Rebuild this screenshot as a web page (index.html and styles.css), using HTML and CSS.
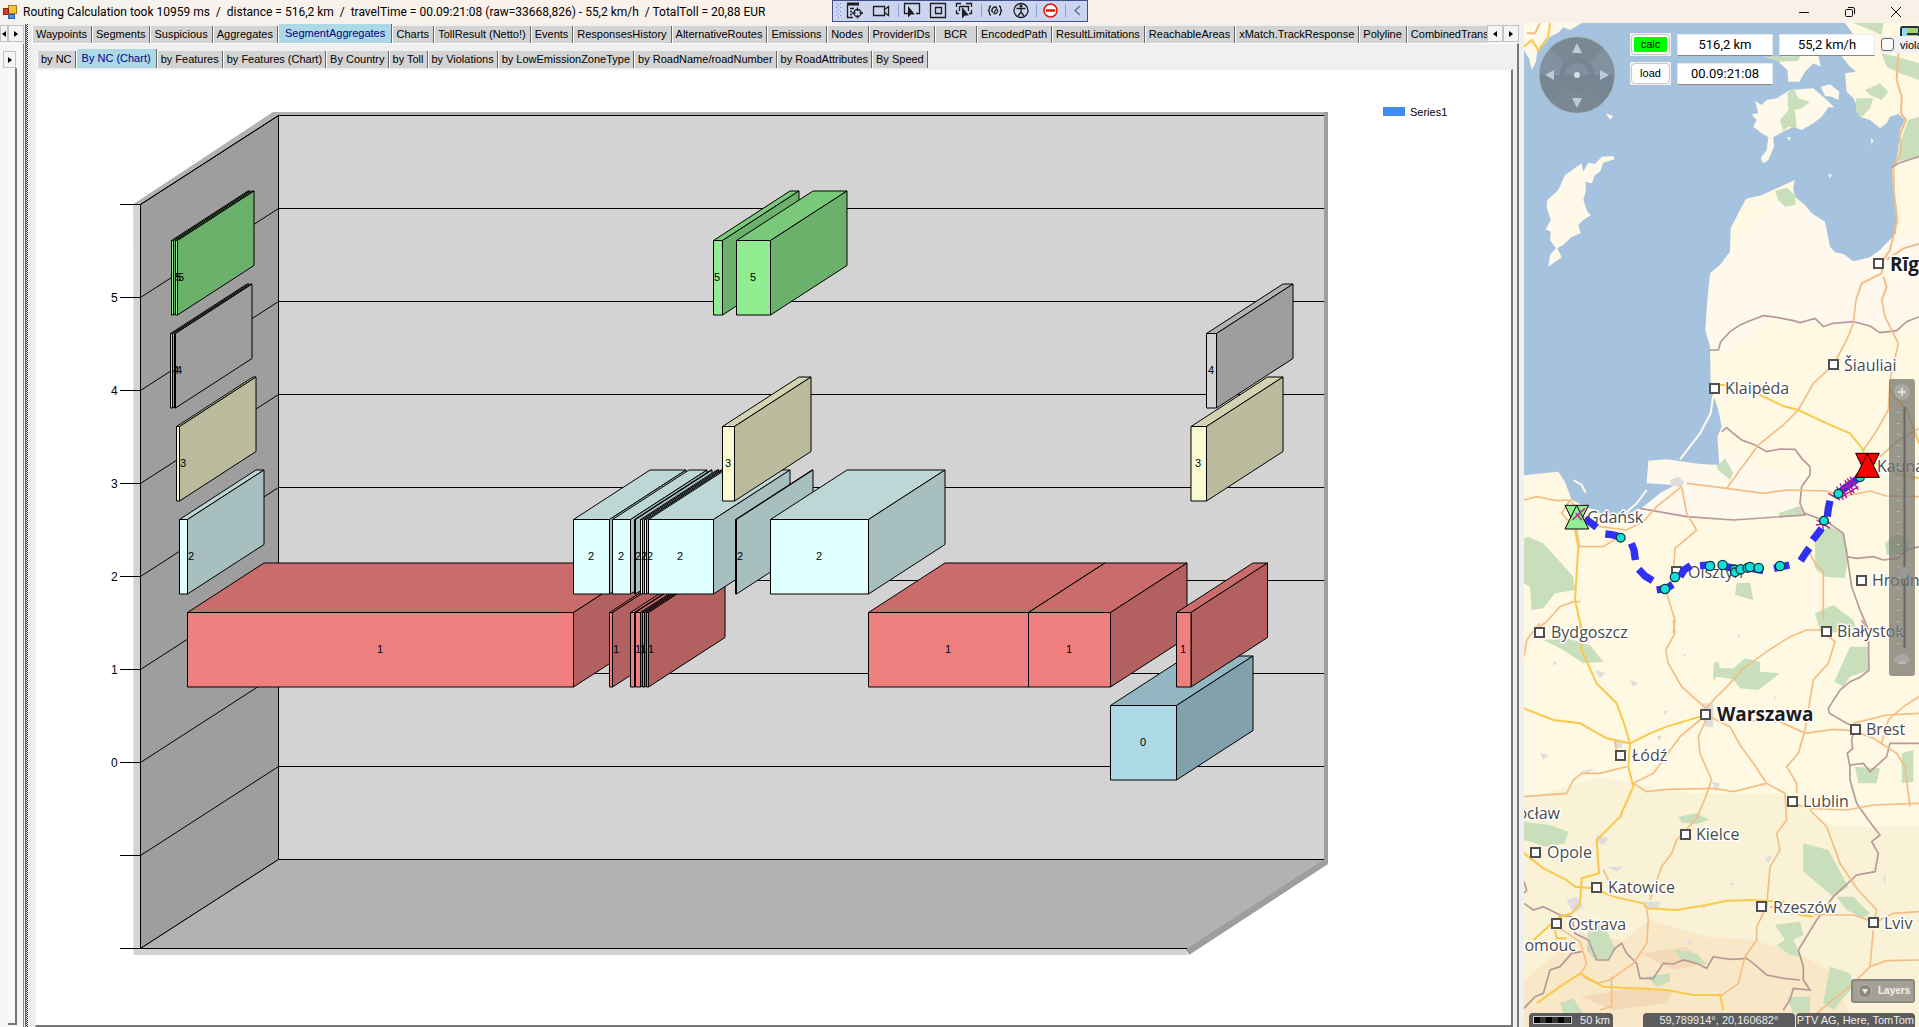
FILE: index.html
```html
<!DOCTYPE html>
<html lang="en">
<head>
<meta charset="utf-8">
<title>Routing Calculation</title>
<link rel="stylesheet" href="styles.css">
</head>
<body>
<header class="titlebar">
  <svg class="app-icon" viewBox="0 0 14 14"><rect x="5.500" y="0.500" width="8" height="8" fill="#f5c42c" stroke="#a67a1a"/><rect x="0.500" y="3.500" width="5" height="6" fill="#d63a2b" stroke="#8d2018"/><rect x="5.500" y="9.500" width="6" height="4" fill="#4a8df0" stroke="#2b5db0"/></svg>
  <h1 class="title">Routing Calculation took 10959 ms  /  distance = 516,2 km  /  travelTime = 00.09:21:08 (raw=33668,826) - 55,2 km/h  / TotalToll = 20,88 EUR</h1>
  <div class="debugbar">
    <svg viewBox="0 0 256 22" aria-hidden="true">
      <g fill="#7f8bb5"><path d="M4 3h1v1h-1zM8 3h1v1h-1zM4 7h1v1h-1zM8 7h1v1h-1zM4 11h1v1h-1zM8 11h1v1h-1zM4 15h1v1h-1zM8 15h1v1h-1zM6 5h1v1h-1zM6 9h1v1h-1zM6 13h1v1h-1zM6 17h1v1h-1z"/></g>
      <g fill="none" stroke="#1e1e1e" stroke-width="1.300">
        <path d="M15.500 5V17.500H21M18 8.500H22M18 11.500H20M18 14.500H20"/><path d="M15 4H27" stroke-width="3"/><circle cx="25.500" cy="13" r="3.500"/><path d="M25.500 7.500V11M25.500 15V18.500M20 13H23.500M27.500 13H31"/>
        <path d="M41.500 6.500H52.500V15.500H41.500zM52.500 9.500L56.500 6.500V15.500L52.500 12.500"/>
        <path d="M76 13.500H72.500V3.500H87.500V13.500H84"/>
        <path d="M98.500 3.500H113.500V17.500H98.500zM103.500 7.500H109.500V13.500H103.500z"/>
        <path d="M124.500 7V3.500H129M134 3.500H139.500V7M139.500 10V13.500H137M127 13.500H124.500V10M127.500 6.500H136.500V11M127.500 6.500V11"/>
        <path d="M159 6C156 6 159 10 156 10.500C159 11 156 15 159 15M167 6C170 6 167 10 170 10.500C167 11 170 15 167 15M161 12.500A3 3 0 0 1 165 8M165.500 9.500A3 3 0 0 1 161.500 13.500M162 13L165 8"/>
        <circle cx="189" cy="10.500" r="7"/><path d="M184.500 8.500H193.500M189 8V12L186 16M189 12L192 16"/>
      </g>
      <path d="M76 6V17.500L79 14.500H83zM130 7V18.500L133 15.500H137z" fill="#1e1e1e"/><circle cx="189" cy="6" r="1.500" fill="#1e1e1e"/>
      <path d="M66.500 4V17M149.500 4V17M204.500 4V17M233.500 4V17" stroke="#8ea0d6"/>
      <circle cx="218.500" cy="10.500" r="6.500" fill="#fff" stroke="#e51400" stroke-width="1.500"/><path d="M214 10.500H223" stroke="#e51400" stroke-width="2.500"/>
      <path d="M248 6L243 10.500L248 15" fill="none" stroke="#5b6694" stroke-width="1.300"/>
    </svg>
  </div>
  <div class="window-buttons">
    <button class="win" aria-label="Minimize"><svg viewBox="0 0 12 12"><path d="M1 6.500H11"/></svg></button>
    <button class="win" aria-label="Restore"><svg viewBox="0 0 12 12"><rect x="1.500" y="3.500" width="7" height="7" rx="1"/><path d="M4 1.500H9Q10.500 1.500 10.500 3V8"/></svg></button>
    <button class="win" aria-label="Close"><svg viewBox="0 0 12 12"><path d="M1 1L11 11M11 1L1 11"/></svg></button>
  </div>
</header>
<main class="workspace">
  <aside class="side">
    <div class="side-scroll"><button class="arrow left" aria-label="Scroll left"></button><button class="arrow right" aria-label="Scroll right"></button></div>
    <div class="side-page"><button class="arrow right" aria-label="Next tab"></button><div class="side-pane"></div></div>
  </aside>
  <div class="splitter"></div>
  <section class="results">
    <div class="tabrow">
      <nav class="tabs">
        <button class="tab">Waypoints</button><button class="tab">Segments</button><button class="tab">Suspicious</button><button class="tab">Aggregates</button><button class="tab active">SegmentAggregates</button><button class="tab">Charts</button><button class="tab">TollResult (Netto!)</button><button class="tab">Events</button><button class="tab">ResponsesHistory</button><button class="tab">AlternativeRoutes</button><button class="tab">Emissions</button><button class="tab">Nodes</button><button class="tab">ProviderIDs</button><button class="tab">BCR</button><button class="tab">EncodedPath</button><button class="tab">ResultLimitations</button><button class="tab">ReachableAreas</button><button class="tab">xMatch.TrackResponse</button><button class="tab">Polyline</button><button class="tab">CombinedTransport</button>
      </nav>
      <div class="tab-scroll"><button class="arrow left" aria-label="Scroll tabs left"></button><button class="arrow right" aria-label="Scroll tabs right"></button></div>
    </div>
    <div class="page">
      <nav class="tabs inner">
        <button class="tab">by NC</button><button class="tab active">By NC (Chart)</button><button class="tab">by Features</button><button class="tab">by Features (Chart)</button><button class="tab">By Country</button><button class="tab">by Toll</button><button class="tab">by Violations</button><button class="tab">by LowEmissionZoneType</button><button class="tab">by RoadName/roadNumber</button><button class="tab">by RoadAttributes</button><button class="tab">By Speed</button>
      </nav>
      <div class="pane"><svg id="chart" class="chart" viewBox="36 70 1475 955" role="img" aria-label="Segments by network class"></svg></div>
    </div>
  </section>
  <section class="map">
    <svg class="map-canvas" viewBox="1524 23 395 1004" preserveAspectRatio="xMinYMin slice">
      <rect x="1524" y="23" width="395" height="1004" fill="#fff8e2"/>
      <g transform="translate(1500 620) scale(.33333)">
        <path d="M72 540L300 470 560 520 840 520 1000 620 1257 620V1221H72Z" fill="#f9f2d6"/>
        <path d="M72 1080L240 940 370 960 450 900 620 950 760 960 900 1000 1000 1060 1060 1221H72Z" fill="#f9e8c8"/>
        <path d="M240 1130L420 1100 520 1110 500 1150 340 1170ZM420 1000L560 980 620 1030 520 1050Z" fill="#f3d9b5"/>
      </g>
      <g fill="#fff8ec"><path d="M1700 280L1780 200 1880 240 1919 230V330L1850 325 1770 320 1730 350 1705 350Z"/><path d="M1590 480L1720 450 1800 480 1790 520 1640 515Z"/></g>
      <g transform="translate(1500 20) scale(.33333)" fill="#a5c3df">
        <path d="M72 9H1035L1058 40 1030 75 1026 110 1050 140 1068 155 1035 160 1040 215 1060 235 1072 260 1080 290 1110 300 1140 325 1160 310 1170 290 1195 282 1215 300 1200 330 1195 390 1185 440 1176 450 1180 520 1190 560 1188 640 1140 690 1110 712 1060 724 1030 702 1005 697 990 680 975 605 935 580 915 555 885 530 880 505 884 480 784 526 738 536 720 570 692 625 690 695 660 735 630 760 622 842H72Z"/>
        <g fill="#fff9ea">
          <path d="M72 9H245L210 30 190 22 175 38 150 50 130 75 112 90 108 125 95 150 88 118 72 90Z"/>
          <path d="M145 740L150 705 168 685 150 660 152 635 137 628 152 600 140 560 142 540 175 510 195 465 245 430 250 455 265 428 285 432 305 410 340 408 343 418 310 428 300 455 285 465 275 490 256 485 258 510 250 540 262 575 273 585 250 600 235 615 242 640 215 650 190 675 172 685 185 712Z"/>
          <path d="M765 243L785 255 800 240 830 235 870 210 940 205 975 235 1003 262 985 262 965 290 940 310 905 330 880 320 840 340 820 352 822 380 805 420 790 430 782 415 800 390 805 352 785 340 760 320 770 300 755 283 775 280Z"/>
          <path d="M962 200L990 193 1018 215 1015 240 995 230 975 228Z"/>
          <path d="M858 105H955L962 140 940 130 915 155 898 185H865L862 150 840 130 830 115Z"/>
          <path d="M318 280L340 288 330 299ZM1113 355L1120 360 1115 375ZM985 462L997 465 990 474ZM862 350L872 352 867 364Z"/>
        </g>
        <g fill="#c9dfbb">
          <path d="M862 220L880 205 895 235 930 245 905 265 885 270 890 325 865 320 850 335 840 300 865 270ZM1068 235L1120 235 1110 265 1085 292 1068 275ZM1095 210L1140 190 1165 215 1145 240 1110 225ZM1060 9H1150L1145 45 1100 25ZM1145 100L1190 110 1257 130V180L1200 160 1160 140ZM1225 300L1257 290V410L1190 425 1200 370ZM825 512L860 503 886 525 886 555 855 560 835 540ZM790 110L900 108 895 122 840 125Z"/>
        </g>
        <g fill="none" stroke="#f4bd85" stroke-width="6"><path d="M1198 60L1190 180 1205 230 1203 280 1218 300 1200 345 1203 400 1180 440 1182 520 1192 600 1170 690 1150 720L1145 760 1085 790 1068 840M1150 770L1160 800 1145 840M1160 720L1210 685 1257 672M120 9L105 40 80 40"/></g>
        <path d="M150 9L145 50 115 90 95 60 72 80" fill="none" stroke="#fac94b" stroke-width="6"/>
        <path d="M1175 443L1195 430 1225 420 1257 410" fill="none" stroke="#b89898" stroke-width="5"/>
      </g>
      <g transform="translate(1500 300) scale(.33333)">
        <path d="M72 -3H622L616 90 630 140 632 250 642 290 655 330 665 380 652 410 655 455 658 495 600 492 500 478 445 482 440 550 525 555 480 580 430 620 380 645 320 648 215 600 195 545 175 515 72 526Z" fill="#a5c3df"/>
        <path d="M640 285L632 340 600 400 540 478M440 570L410 610 370 645M220 540L245 555 257 578" fill="none" stroke="#fff9ea" stroke-width="6"/>
        <path d="M84 710L130 730 220 830 225 870 165 880 130 925 95 930 90 860 72 850V715ZM650 500L675 475 700 520 690 540 655 510ZM835 640L900 618 915 645 840 652ZM945 700L990 680 1030 700 1045 760 1035 835 975 830 945 805ZM710 850L750 848 760 900 705 885ZM945 940L1000 915 1060 960 1070 990H960ZM1155 730L1190 700 1225 720 1225 760 1160 765Z" fill="#c9dfbb"/>
        <path d="M510 540L535 530 552 545 545 560 512 558Z" fill="#e0dcd8"/>
        <g fill="none" stroke="#b89898" stroke-width="5"><path d="M628 150L655 150 662 125 690 95 720 75 750 62 790 47 830 52 880 62 900 68 945 55 970 80 1000 70 1060 65 1110 78 1140 98 1190 92 1220 65 1257 50M665 395L680 383 700 400 725 420 765 435 800 455 840 447 885 448 905 475 930 500 930 525 905 560 900 610 915 645 700 660 560 650 420 625M915 640L980 665 1030 700 1040 760 1055 860 1080 930 1110 1000M1040 770L1070 775 1120 770 1150 780 1190 775 1220 750 1257 740"/></g>
        <g fill="none" stroke="#f4bd85" stroke-width="5"><path d="M1068 0L1060 70 1040 120 1000 195 940 250 895 330 850 375 775 435 720 510 680 565 560 550M1145 0L1155 50 1195 130 1170 240 1165 330 1125 400 1090 450M680 565L790 580 860 570 980 573 1030 590 1110 573 1160 588 1257 590M545 560L470 620 430 665 380 690 300 680 250 650 210 600 170 602 110 590 72 600M545 560L560 640 590 690 525 745 520 830 500 880 525 960 520 1000M210 600L185 640 230 690 238 740 310 740 350 715M930 760L945 790 970 815 970 960M105 990L140 965 180 920 220 905 240 905M1140 470L1190 425 1257 385"/></g>
        <g fill="none" stroke="#fac94b" stroke-width="6"><path d="M660 255H720L790 290 850 318 895 330 980 370 1050 400 1090 450V470L1180 520 1257 535M225 690L235 740 225 900 245 990M1170 270L1220 330 1257 430"/></g>
      </g>
      <g transform="translate(1500 620) scale(.33333)">
        <path d="M130 60L200 55 270 75 310 125 250 130 190 90ZM640 130L655 125 660 145 700 145 735 115 780 125 780 155 840 160 775 210 720 205 700 178 650 170 640 185ZM1050 80L1105 80 1105 150 1050 170 1030 200 1003 185ZM955 0L1040 0 1060 30 980 40ZM72 605L150 615 205 635 195 670 140 680 72 660ZM535 590L590 580 628 600 590 612 545 608ZM910 670L985 690 1045 800 1000 830 910 755ZM1065 440L1140 445 1130 490 1075 490ZM1205 400L1240 390 1240 485 1205 490ZM265 930L310 910 345 985 320 1020 285 1020 260 990ZM525 990L590 1000 620 1035 540 1015ZM825 915L900 905 910 945 880 960 905 1010 870 1005 830 975 855 960ZM440 1070L510 1060 510 1085 470 1100ZM860 1130L930 1130 930 1180H880ZM990 1040L1050 1060 1060 1100 1000 1170 970 1150ZM1010 830L1060 830 1110 880 1090 895 1040 870ZM180 1150L220 1135 250 1180H190Z" fill="#c9dfbb"/>
        <path d="M605 250H640V320H615ZM340 360L370 365 365 385H345ZM390 180L415 190 400 200ZM285 150L315 160 300 175ZM240 455L285 445 260 460ZM290 645L325 655 310 675 290 665ZM200 840L230 830 250 860 220 880ZM430 845L480 845 475 870 435 865ZM320 740L370 740 350 755ZM550 100L560 105 552 110ZM780 490L800 488 790 500ZM635 485L660 490 650 515ZM120 400L145 405 130 420ZM470 350L485 345 480 362ZM710 45L722 42 716 55ZM160 125L172 128 162 138ZM490 275L502 270 496 285ZM795 715L818 705 805 730ZM600 860L622 855 612 868ZM690 790L705 788 697 800ZM560 960L575 960 570 980ZM1150 770L1158 768 1153 800ZM820 230L830 230 826 238ZM360 585L370 585 362 600Z" fill="#dedcdf"/>
        <g fill="none" stroke="#b89898" stroke-width="5"><path d="M1085 0L1105 35 1107 150 1080 172 1050 185 1020 210 985 265 988 280 1040 310 1065 320 1055 360 1058 385 1042 400 1050 440 1050 480 1070 550 1105 600 1140 645 1115 665 1135 700 1125 755 1070 765 1000 830 950 900 895 990 910 1040 910 1080 930 1110 880 1105 870 1140 850 1170M1050 435L1090 430 1110 455 1160 410 1170 370H1257M72 850L100 870 130 860 180 885 215 890 225 940 265 960 290 1020 325 1020 345 985 365 970 380 1000 410 1030 420 1075 460 1075 490 1030 520 1032 550 1020 590 1030 620 1045 640 1010 670 1015 700 1018 740 1015 760 1030 800 1065 850 1075 900 1080M245 995L215 1000 180 1040 150 1050 130 1120 105 1130 72 1165M72 785L80 810 72 820"/></g>
        <g fill="none" stroke="#f4bd85" stroke-width="5"><path d="M520 0L525 40 497 90 505 130 545 200 618 265 650 230 690 190 730 145 800 95 870 50 920 30 960 30 1005 65 985 130 940 180 930 240 915 330 895 400 860 440 890 490 890 520M618 285L540 350 500 405 460 460 400 490 440 515 500 508 640 505 700 515 800 490 855 520 860 600 830 640 840 690 810 740 800 860 770 920 770 960 735 1010 715 1090 660 1130M618 300L595 350 600 400 635 480 615 535 590 595 530 660 515 700 485 740 450 840M618 285L690 320 720 375 760 430 800 490M720 300L840 305 915 340 1000 328 1060 332 1120 355 1190 400 1215 440 1230 560M1060 310L1160 285 1257 280M1145 370L1165 300 1210 260 1257 230M870 548L930 565 1040 570 1120 555 1257 550M930 570L980 620 1020 730 1070 805 1130 870 1120 910 1180 880 1257 875M1120 930L1110 1040 1060 1090 1010 1130 950 1180M1110 1040L1160 1022 1257 1020M72 530L200 520 220 480 245 460 300 460 380 440M345 360L350 400M810 860L870 880 1010 885 1060 885 1120 905M440 870L445 900 440 970 400 1030 330 1080 290 1090 250 1070M310 750L330 790M72 110L80 60 120 10M180 925L240 965 260 1030 240 1065M335 1070V1160L300 1170"/></g>
        <g fill="none" stroke="#fac94b" stroke-width="6"><path d="M240 0L245 90 290 190 350 250 372 310 390 370 385 440 400 500 360 590 290 660 297 760 245 775 240 850 215 880 180 890 140 925 100 960M72 265L160 300 240 310 320 355 390 370 450 340 500 320 600 290M72 700L130 745 200 780 225 800 280 805 340 830 430 850 440 865 530 870 620 855 680 842 750 840 850 845 900 885 940 890M165 930L170 955 200 955M110 1150L180 1100 240 1060 310 1100 400 1105 500 1110 580 1125 660 1125 670 1170"/></g>
      </g>
      <g class="city-box" fill="#fff" stroke="#505050" stroke-width="2"><rect x="1874" y="259" width="9" height="9"/><rect x="1829" y="360" width="9" height="9"/><rect x="1710" y="384" width="9" height="9"/><rect x="1672" y="567" width="9" height="9"/><rect x="1857" y="576" width="9" height="9"/><rect x="1822" y="627" width="9" height="9"/><rect x="1535" y="628" width="9" height="9"/><rect x="1701" y="710" width="9" height="9"/><rect x="1616" y="751" width="9" height="9"/><rect x="1851" y="725" width="9" height="9"/><rect x="1788" y="797" width="9" height="9"/><rect x="1681" y="830" width="9" height="9"/><rect x="1531" y="848" width="9" height="9"/><rect x="1592" y="883" width="9" height="9"/><rect x="1552" y="919" width="9" height="9"/><rect x="1757" y="902" width="9" height="9"/><rect x="1869" y="918" width="9" height="9"/></g>
      <g class="city">
        <text class="capital" x="1890" y="271">Rīga</text><text x="1844" y="371">Šiauliai</text><text x="1725" y="394">Klaipėda</text><text x="1877" y="472">Kaunas</text><text x="1587" y="523">Gdańsk</text><text x="1688" y="578">Olsztyn</text><text x="1872" y="586">Hrodna</text><text x="1837" y="637">Białystok</text><text x="1551" y="638">Bydgoszcz</text><text class="capital" x="1717" y="721">Warszawa</text><text x="1632" y="761">Łódź</text><text x="1866" y="735">Brest</text><text x="1803" y="807">Lublin</text><text x="1696" y="840">Kielce</text><text x="1560" y="819" text-anchor="end">ocław</text><text x="1547" y="858">Opole</text><text x="1608" y="893">Katowice</text><text x="1568" y="930">Ostrava</text><text x="1773" y="913">Rzeszów</text><text x="1884" y="929">Lviv</text><text x="1576" y="951" text-anchor="end">lomouc</text>
      </g>
      <g transform="translate(1500 300) scale(.33333)">
        <g fill="none" stroke="#3030f5" stroke-width="22" stroke-linejoin="round"><path d="M255 655L290 682M316 702L335 704 358 710M394 730L402 750 406 780M416 808L435 828 458 842M470 870L500 865 518 853M540 830L552 810 572 797M600 797L640 795M660 795L700 805M740 802L790 812M822 805L868 795M902 782L915 762 928 744M938 720L950 705 965 685M982 650L985 625 990 602M1010 585L1040 560 1075 535"/></g>
        <g stroke="#b5169b" stroke-width="4"><path d="M215 660L255 625M225 635L250 665M240 620L235 670M950 660L990 685M948 675L992 668M965 650L970 690M1000 590L1065 530M1020 550L1040 595M1035 540L1055 585M1050 530L1075 570M1010 560L1030 600M1015 575L1070 545M1025 590L1075 560M1042 535L1062 580M985 580L1020 600"/></g>
        <g fill="#12dede" stroke="#083838" stroke-width="4"><circle cx="362" cy="713" r="13"/><circle cx="495" cy="867" r="14"/><circle cx="525" cy="831" r="14"/><circle cx="630" cy="798" r="14"/><circle cx="668" cy="795" r="14"/><circle cx="703" cy="808" r="13"/><circle cx="705" cy="817" r="13"/><circle cx="722" cy="808" r="14"/><circle cx="742" cy="804" r="13"/><circle cx="750" cy="801" r="14"/><circle cx="776" cy="804" r="14"/><circle cx="840" cy="798" r="14"/><circle cx="972" cy="662" r="13"/><circle cx="1015" cy="581" r="13"/><circle cx="1080" cy="532" r="13"/></g>
        <g stroke="#000" stroke-width="3"><path d="M195 616H266L230 687Z" fill="#90ee90"/><path d="M195 687H266L230 616Z" fill="#90ee90"/><path d="M1067 460H1138L1102 532Z" fill="#f00"/><path d="M1067 532H1138L1102 460Z" fill="#f00"/><path d="M217 660L255 625M228 640L245 660" stroke="#b5309b" stroke-width="5"/></g>
      </g>
      <g transform="translate(1577 75)">
        <circle r="38.500" fill="#6f7c88" fill-opacity=".88" stroke="#a9bfd2" stroke-width="2"/>
        <path d="M-27 -27A38 38 0 0 1 27 -27L12 -12A17 17 0 0 0 -12 -12ZM-27 27A38 38 0 0 0 27 27L12 12A17 17 0 0 1 -12 12Z" fill="#7d8a95" fill-opacity=".6"/>
        <path d="M-37 0A37 37 0 0 1 -26 -26L-13 -13A17 17 0 0 0 -17 0ZM37 0A37 37 0 0 0 26 -26L13 -13A17 17 0 0 1 17 0ZM-12 0A12 12 0 0 1 12 0Z" fill="#8696a5" fill-opacity=".7"/>
        <path d="M0 -32L5 -22H-5ZM0 33L5 23H-5ZM-32 0L-23 -5V5ZM32 0L23 -5V5Z" fill="#bdcbd8"/><circle r="3" fill="#d5dfe8"/>
      </g>
      <g>
        <rect x="1889" y="379" width="26" height="297" rx="3" fill="#77766f" fill-opacity=".75"/>
        <path d="M1904.500 407V648" stroke="#666" stroke-width="2"/><path d="M1898.500 412V644" stroke="#b8b8b0" stroke-width="3" stroke-dasharray="1 10"/>
        <circle cx="1902" cy="392" r="8" fill="#a9a8a3"/><path d="M1898 392H1906M1902 388V396" stroke="#eee" stroke-width="1.500"/>
        <path d="M1894 662A8 8 0 0 1 1910 662Z" fill="#a9a8a3"/><path d="M1898 663H1906" stroke="#ddd"/><ellipse cx="1904" cy="573" rx="4" ry="6" fill="#9a9993"/>
      </g>
    </svg>
    <svg class="overview" viewBox="0 0 18 14" aria-hidden="true"><rect x="1" y="1" width="18" height="16" rx="2" fill="#a8d070" stroke="#234" stroke-width="2"/><path d="M2 2H8L6 14H2Z" fill="#9ad5ee"/><path d="M7 8H18" stroke="#234" stroke-width="2"/></svg>
    <form class="controls">
      <button type="button" class="cmd go"><span>calc</span></button>
      <input class="field" aria-label="Distance" value="516,2 km">
      <input class="field" aria-label="Average speed" value="55,2 km/h">
      <label class="check"><input type="checkbox">violations</label>
      <button type="button" class="cmd"><span>load</span></button>
      <input class="field" aria-label="Travel time" value="00.09:21:08">
    </form>
    <button class="layers"><svg viewBox="0 0 16 16"><circle cx="8" cy="8" r="6.500" fill="#8a887f" stroke="#b5b3aa"/><path d="M5 6H11L8 11Z" fill="#f0f0ea"/></svg>Layers</button>
    <footer class="map-status">
      <span class="pill scale"><i class="bar"></i>50 km</span>
      <span class="pill coords">59,789914°, 20,160682°</span>
      <span class="pill credits">PTV AG, Here, TomTom</span>
    </footer>
  </section>
</main>
<script src="chart.js"></script>
</body>
</html>
```
FILE: styles.css
```css
* { box-sizing: border-box; }
body {
  margin: 0;
  height: 100vh;
  display: flex;
  flex-direction: column;
  overflow: hidden;
  background: #f0f0f0;
  color: #000;
  font: 11px/14px "Liberation Sans", Arial, sans-serif;
}
button, input { font: inherit; color: inherit; }
button { padding: 0; border: 0; background: none; }

.titlebar {
  position: relative;
  flex: none;
  height: 23px;
  display: flex;
  align-items: center;
  gap: 6px;
  padding-left: 3px;
  background: linear-gradient(90deg, #f4f3ef, #f9f1ea 25%, #f9f0e8);
}
.app-icon { width: 14px; height: 14px; }
.title {
  margin: 0;
  font: 12px/16px Roboto, "Open Sans", sans-serif;
  white-space: pre;
}
.debugbar {
  position: absolute;
  top: 0;
  left: 43.35%;
  width: 256px;
  height: 22px;
  background: #ccd5f0;
  outline: 1px solid #40508a;
  outline-offset: -1px;
}
.debugbar svg { display: block; width: 100%; height: 100%; }
.window-buttons { display: flex; margin-left: auto; }
.win { width: 46px; height: 20px; }
.win svg { width: 12px; height: 12px; fill: none; stroke: #111; display: block; margin: auto; }

.workspace { flex: 1; min-height: 0; display: flex; }

.arrow {
  display: grid;
  place-items: center;
  flex: 1;
  height: 17px;
  border: 1px solid #c4c4c4;
  background: #f4f4f4;
}
.arrow::before { content: ""; border: 3px solid transparent; }
.arrow.left::before { border-right: 4px solid #000; border-left: 0; }
.arrow.right::before { border-left: 4px solid #000; border-right: 0; }

.side { flex: none; width: 24px; display: flex; flex-direction: column; padding-top: 2px; }
.side-scroll { display: grid; grid-template-columns: 8px 16px; margin-bottom: 1px; }
.side-page {
  flex: 1;
  display: flex;
  flex-direction: column;
  padding: 7px 6px 2px 0;
  border-top: 1px solid #fff;
  border-right: 1px solid #888;
  background: #f6f6f6;
}
.side-page > .arrow { flex: none; width: 13px; margin-left: 3px; }
.side-pane { flex: 1; border-right: 2px solid #777; border-bottom: 2px solid #777; margin-left: 8px; background: #f9f9f9; }
.splitter {
  flex: none;
  width: 4px;
  margin: 1px 3px 0 1px;
  background: repeating-conic-gradient(#222 0 25%, #fff 0 50%) 0 0 / 2px 2px;
  border-right: 1px solid #f0f0f0;
  border-left: 1px solid #666;
}

.results { flex: 1; min-width: 0; display: flex; flex-direction: column; padding-right: 5px; }
.tabrow { display: flex; height: 20px; flex: none; }
.tabs { flex: 1; min-width: 0; display: flex; align-items: flex-end; overflow: hidden; }
.tab {
  flex: none;
  height: 17px;
  min-width: 42px;
  padding: 0 4px 0 3px;
  border-left: 1px solid #fff;
  border-right: 1px solid #666;
  background: #d3d3d3;
  line-height: 17px;
  white-space: nowrap;
}
.tab.active { height: 19px; padding: 0 6px; background: #add8e6; color: #00008b; }
.tab-scroll { display: flex; width: 32px; padding-top: 2px; }
.page {
  flex: 1;
  min-height: 0;
  display: flex;
  flex-direction: column;
  padding: 5px 4px 0 3px;
  border-top: 1px solid #fff;
  border-right: 2px solid #777;
}
.tabs.inner { flex: none; height: 20px; padding: 0 0 1px 2px; }
.inner .tab { min-width: 38px; padding: 0 3px; }
.inner .tab.active { padding: 0 5px; }
.pane {
  flex: 1;
  min-height: 0;
  background: #fff;
  border: solid #f0f0f0;
  border-width: 1px 2px 2px 1px;
  border-right-color: #777;
  border-bottom-color: #777;
}
.chart { display: block; width: 100%; height: 100%; }
.chart text { font: 11px "Liberation Sans", Arial, sans-serif; }
.chart .axis { font-size: 12px; }

.map { position: relative; flex: 0 0 395px; overflow: hidden; }
.map-canvas { display: block; width: 100%; height: 100%; }
.city text {
  font: 16px "Open Sans", "Noto Sans", sans-serif;
  fill: #4a4a4a;
  stroke: #fff;
  stroke-width: 3px;
  stroke-linejoin: round;
  paint-order: stroke;
}
.city .capital { font-size: 19px; font-weight: 700; fill: #1c1c1c; }
.overview { position: absolute; top: 3px; right: 0; width: 20px; height: 14px; }
.controls {
  position: absolute;
  top: 10px;
  left: 106px;
  display: grid;
  grid-template-columns: 41px 96px 96px 72px;
  gap: 6px;
  align-items: center;
}
.cmd { height: 23px; padding: 1px; background: #f0f0f0; }
.cmd span { display: block; height: 21px; padding: 2px; border: 1px solid #c8c8c8; border-radius: 4px; background: #fdfdfd; line-height: 15px; }
.cmd.go span { background: #0f0 content-box; box-shadow: inset 0 0 0 2px #fff; }
.field {
  width: 100%;
  min-width: 0;
  height: 22px;
  padding: 0;
  border: 1px solid #e8e8e8;
  border-bottom-color: #888;
  background: #fff;
  font: 13px Roboto, "Liberation Sans", sans-serif;
  text-align: center;
}
.check { display: flex; align-items: center; gap: 6px; height: 17px; background: #f0f0f0; overflow: hidden; }
.check input {
  flex: none;
  appearance: none;
  width: 13px;
  height: 13px;
  margin: 0;
  border: 1px solid #666;
  border-radius: 3px;
  background: #fafafa;
}
.layers {
  position: absolute;
  right: 4px;
  bottom: 24px;
  display: flex;
  align-items: center;
  gap: 5px;
  width: 64px;
  height: 24px;
  padding: 0 4px;
  border: 2px solid #888780;
  border-radius: 3px;
  background: #a3a196;
  color: #f4f4ee;
  font-weight: 700;
  font-size: 10px;
}
.layers svg { flex: none; width: 16px; height: 16px; }
.map-status {
  position: absolute;
  right: 4px;
  bottom: 0;
  left: 5px;
  display: flex;
  gap: 1px;
  color: #eee;
}
.pill { padding: 0 3px; border-radius: 4px 4px 0 0; background: #5c5c5c; white-space: nowrap; }
.scale { display: flex; align-items: center; gap: 8px; width: 84px; margin-right: auto; padding-left: 4px; }
.bar {
  width: 41px;
  height: 8px;
  border: 1px solid #ccc;
  background: repeating-linear-gradient(90deg, #000 0 6px, #333 6px 12px);
}
.coords { flex: 0 0 152px; text-align: center; }
.credits { padding: 0 1px; }
```
FILE: chart.js
```javascript
const svg = document.getElementById("chart");
const NS = "http://www.w3.org/2000/svg";

function add(name, attrs, text) {
  const el = document.createElementNS(NS, name);
  for (const key in attrs) el.setAttribute(key, attrs[key]);
  if (text !== undefined) el.textContent = text;
  svg.appendChild(el);
}
function face(points, fill, stroke = "#000", extra = {}) {
  add("polygon", { points, fill, stroke, ...extra });
}

// Scene frame
face("133.500,204 273,112 1324,112 1324,115.500 278.500,115.500 140.500,204.500 140.500,948", "#b2b2b2", "none");
face("133.500,204 140.500,204 140.500,948 1187,948 1187,955 133.500,955", "#d3d3d3", "none");
face("1324,112 1328,112 1328,864 1189,955 1185,948 1324,859", "#9e9e9e", "none");

// Walls and floor
face("278.500,115.500 1324,115.500 1324,859.500 278.500,859.500", "#d3d3d3", "none");
face("140.500,204.500 278.500,115.500 278.500,859.500 140.500,948.500", "#9e9e9e");
face("140.500,948.500 278.500,859.500 1324,859.500 1187,948.500", "#b2b2b2", "none");
for (let i = 0; i < 9; i++) {
  const y = 204.5 + i * 93;
  const label = 6 - i;
  add("path", { d: `M120 ${y}H140.500L278.500 ${y - 89}H1324`, fill: "none", stroke: "#000" });
  if (label >= 0 && label <= 5) add("text", { x: 111, y: y + 4, class: "axis" }, label);
}
add("path", { d: "M140.500 948.500H1187", stroke: "#000" });

const colors = {
  0: ["#add8e6", "#92b6c2", "#82a1ac"],
  1: ["#f08080", "#ca6c6c", "#b36060"],
  2: ["#e0ffff", "#bdd7d7", "#a7bfbf"],
  3: ["#fafad2", "#d3d3b1", "#bbbb9d"],
  4: ["#d3d3d3", "#b2b2b2", "#9e9e9e"],
  5: ["#90ee90", "#7ac97a", "#6bb16c"],
};

// [network class, start, end, label position]
const bars = [
  [0, 1110.5, 1176.5, 1143],
  [1, 187.5, 573.5, 380], [1, 609.5, 612.5, 616], [1, 630.5, 634.5], [1, 635.5, 640.5, 638], [1, 642.5, 644.5, 643],
  [1, 646.5, 648.5, 651], [1, 868.5, 1028.5, 948], [1, 1028.5, 1110.5, 1069], [1, 1176.5, 1191, 1183],
  [2, 179.5, 187.5, 191], [2, 573.5, 609.5, 591], [2, 612.5, 630.5, 621], [2, 634.5, 635.5, 638], [2, 640.5, 642.5, 644],
  [2, 644.5, 646.5, 650], [2, 648.5, 713.5, 680], [2, 735.5, 736.5, 740], [2, 770.5, 868.5, 819],
  [3, 176.5, 179.5, 183], [3, 722.5, 734.5, 728], [3, 1191, 1206.5, 1198],
  [4, 170.5, 172.5, 176], [4, 174.5, 175.5, 179], [4, 1206.5, 1216.5, 1211],
  [5, 171.5, 173.5, 178], [5, 175.5, 177.5, 181], [5, 713.5, 722.5, 717], [5, 736.5, 770.5, 753],
];
const DX = 76.5, DY = 49.5, H = 74.5;

for (const [cls, a, b] of bars) {
  const y = 240.5 + (5 - cls) * 93;
  const [front, top, side] = colors[cls];
  const join = { "stroke-linejoin": "bevel" };
  face(`${a},${y} ${a + DX},${y - DY} ${b + DX},${y - DY} ${b},${y}`, top, "#000", join);
  face(`${b},${y} ${b + DX},${y - DY} ${b + DX},${y - DY + H} ${b},${y + H}`, side, "#000", join);
  face(`${a},${y} ${b},${y} ${b},${y + H} ${a},${y + H}`, front, "#000", join);
}
for (const [cls, , , at] of bars) {
  if (at) add("text", { x: at, y: 281 + (5 - cls) * 93, "text-anchor": "middle" }, cls);
}

// Legend
add("rect", { x: 1383, y: 107, width: 22, height: 9, fill: "#418cf0" });
add("text", { x: 1410, y: 116 }, "Series1");
```
